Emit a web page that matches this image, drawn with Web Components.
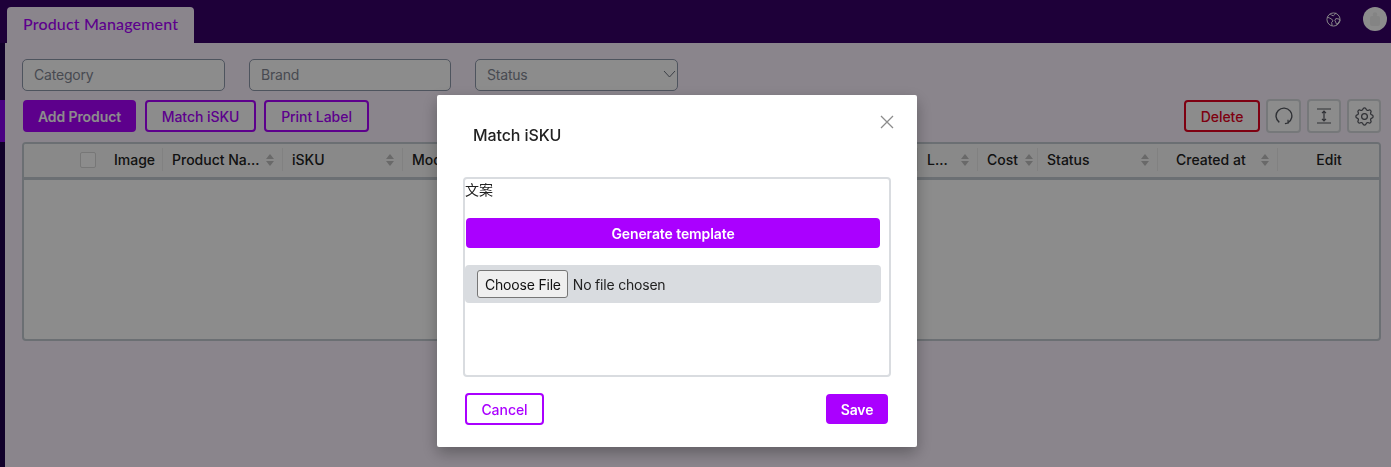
<!DOCTYPE html>
<html lang="en">
<head>
<meta charset="utf-8">
<title>Product Management</title>
<style>
html, body { margin: 0; height: 100%; overflow: hidden; }
body { font-family: Inter, "Liberation Sans", sans-serif; font-size: 14px; background: #fbf2ff; }
</style>
</head>
<body>
<top-bar></top-bar>
<div style="display:flex;height:424px">
    <side-rail></side-rail>
    <product-page style="flex:1"></product-page>
</div>
<match-modal></match-modal>

<script>
const ICONS = {
    globe: `<svg width="15" height="15" viewBox="0 0 16 16" fill="none" stroke="#fff" stroke-width="1"><circle cx="8" cy="8" r="7"/><path d="M1.500 5.500 4 6.500l2 1 1.500 2-1.500 1.500.5 3.500M4.500 2l1.500 1.500 2 .5 1-1 1.500-2.200M9.500 9l1-2 3.500 .5.8 1.500-2 3-1.500 1.200-1-2.500z"/></svg>`,
    refresh: `<svg width="18" height="18" viewBox="0 0 18 18" fill="none" stroke="#555860" stroke-width="1.400"><path d="M4.300 15.400A7.900 7.900 0 1 1 12.800 15.900"/><path d="M13 12.800l.1 3.300-3.200.6" stroke-width="1.200"/></svg>`,
    height: `<svg width="16" height="16" viewBox="0 0 16 16" fill="none" stroke="#555860" stroke-width="1.200"><path d="M1 1h14M1 15h14M8 3.500v9M6 5.200l2-2 2 2M6 10.800l2 2 2-2"/></svg>`,
    gear: `<svg width="23" height="23" viewBox="0 0 24 24" fill="none" stroke="#555860" stroke-width="1.300"><path d="M10.325 4.317c.426-1.756 2.924-1.756 3.350 0a1.724 1.724 0 002.573 1.066c1.543-.94 3.310.826 2.370 2.370a1.724 1.724 0 001.065 2.572c1.756.426 1.756 2.924 0 3.350a1.724 1.724 0 00-1.066 2.573c.94 1.543-.826 3.310-2.370 2.370a1.724 1.724 0 00-2.572 1.065c-.426 1.756-2.924 1.756-3.350 0a1.724 1.724 0 00-2.573-1.066c-1.543.94-3.310-.826-2.370-2.370a1.724 1.724 0 00-1.065-2.572c-1.756-.426-1.756-2.924 0-3.350a1.724 1.724 0 001.066-2.573c-.94-1.543.826-3.310 2.370-2.370.996.608 2.296.07 2.572-1.065z"/><circle cx="12" cy="12" r="3"/></svg>`
};

class TopBar extends HTMLElement {
    constructor(){
        super();
        this.attachShadow({mode: 'open'});
    }
    connectedCallback(){
        this.shadowRoot.innerHTML = `
        <style>
        :host { display: flex; height: 43px; background: #370068; padding-left: 7px; padding-right: 4px; box-sizing: border-box; align-items: flex-end; }
        .tab { width: 187px; height: 36px; box-sizing: border-box; padding-left: 16px; background: #fbf2ff; border-radius: 4px 4px 0 0;
               font: 500 16px/34px Lato, "Liberation Sans", sans-serif; letter-spacing: .16px; color: #aa00ff; }
        .right { margin-left: auto; align-self: stretch; display: flex; align-items: center; gap: 22px; }
        .globe { display: flex; margin-top: -5px; }
        .avatar { width: 24px; height: 24px; border-radius: 50%; background: #fff; margin-top: -5px; display: flex; align-items: center; justify-content: center; }
        </style>
        <div class="tab">Product Management</div>
        <div class="right">
            <span class="globe">${ICONS.globe}</span>
            <span class="avatar"><svg width="12" height="14" viewBox="0 0 12 14" fill="#f0f0f0"><rect x="1" y="4" width="10" height="10" rx="2"/><circle cx="6" cy="2.500" r="2.200"/></svg></span>
        </div>`;
    }
}

class SideRail extends HTMLElement {
    constructor(){
        super();
        this.attachShadow({mode: 'open'});
    }
    connectedCallback(){
        this.shadowRoot.innerHTML = `
        <style>
        :host { display: block; width: 5px; background: #20004d; padding-top: 57px; box-sizing: border-box; }
        .active { height: 42px; background: #8800ed; }
        </style>
        <div class="active"></div>`;
    }
}

class FilterField extends HTMLElement {
    constructor(){
        super();
        this.attachShadow({mode: 'open'});
    }
    connectedCallback(){
        const chevron = this.hasAttribute('select') ? `<svg width="13" height="8" viewBox="0 0 13 8" fill="none" stroke="#6d7380" stroke-width="1"><path d="M1 1l5.500 6L12 1"/></svg>` : '';
        this.shadowRoot.innerHTML = `
        <style>
        :host { display: flex; align-items: center; justify-content: space-between; width: 203px; height: 32px; box-sizing: border-box;
                padding: 0 1px 2px 11px; border: 1px solid #8f99ab; border-radius: 5px; background: #fff; color: #838894; font-size: 14px; letter-spacing: -.2px; }
        </style>
        <span><slot></slot></span>${chevron}`;
    }
}

class AppButton extends HTMLElement {
    static get observedAttributes (){
        return ['kind'];
    }
    constructor(){
        super();
        this.attachShadow({mode: 'open'});
    }
    connectedCallback(){
        this.shadowRoot.innerHTML = `
        <style>
        :host { display: inline-flex; align-items: center; justify-content: center; box-sizing: border-box; height: 32px; border-radius: 4px;
                border: 2px solid #aa00ff; color: #aa00ff; background: #fff; font-size: 14px; font-weight: 500; letter-spacing: -.05px; }
        :host([kind="solid"]) { background: #aa00ff; color: #fff; border-color: #aa00ff; font-weight: 600; letter-spacing: -.1px; }
        :host([kind="danger"]) { border-color: #e60020; color: #e60020; }
        </style>
        <slot></slot>`;
    }
}

class IconButton extends HTMLElement {
    constructor(){
        super();
        this.attachShadow({mode: 'open'});
    }
    connectedCallback(){
        this.shadowRoot.innerHTML = `
        <style>
        :host { display: flex; align-items: center; justify-content: center; width: 34px; height: 34px; box-sizing: border-box;
                border: 2px solid #d8dbdf; border-radius: 4px; background: #fff; }
        </style>
        ${ICONS[this.getAttribute('icon')]}`;
    }
}

class SortArrows extends HTMLElement {
    constructor(){
        super();
        this.attachShadow({mode: 'open'});
    }
    connectedCallback(){
        this.shadowRoot.innerHTML = `
        <style>
        :host { display: flex; flex-direction: column; gap: 2px; }
        i { width: 0; height: 0; border-left: 4px solid transparent; border-right: 4px solid transparent; }
        .up { border-bottom: 5px solid #bfbfbf; }
        .down { border-top: 5px solid #bfbfbf; }
        </style>
        <i class="up"></i><i class="down"></i>`;
    }
}

class DataTable extends HTMLElement {
    constructor(){
        super();
        this.attachShadow({mode: 'open'});
    }
    connectedCallback(){
        // [title, width, sortable, extra class]
        const cols = [
            ['Product Na...', 120, true],
            ['iSKU', 120, true],
            ['Model', 515, false],
            ['L...', 60, true],
            ['Cost', 60, true, 'tight'],
            ['Status', 120, true],
            ['Created at', 120, true, 'created'],
            ['Edit', 0, false, 'center']
        ];
        const cells = cols.map(c => `
            <div class="th ${c[3] || ''}" style="${c[1] ? 'width:' + c[1] + 'px' : 'flex:1'}">
                <span>${c[0]}</span>${c[2] ? '<sort-arrows></sort-arrows>' : ''}
            </div>`).join('');
        this.shadowRoot.innerHTML = `
        <style>
        :host { display: block; height: 199px; box-sizing: border-box; border: 2px solid #c3cad1; border-radius: 4px; background: #fff; overflow: hidden; }
        .head { display: flex; height: 33px; padding-bottom: 2px; box-sizing: border-box; height: 33px; border-bottom: 0; background: #fafafa; align-items: center; }
        .rule { height: 3px; background: #c3cad1; }
        .first { width: 139px; box-sizing: border-box; display: flex; align-items: center; padding-left: 56px; gap: 18px; height: 23px; border-right: 1px solid #ececec; font-weight: 500; color: #222; flex: none; }
        .check { width: 16px; height: 16px; box-sizing: border-box; border: 1px solid #d9d9d9; border-radius: 2px; background: #fff; }
        .th { height: 23px; box-sizing: border-box; display: flex; align-items: center; justify-content: space-between; padding: 0 8px 0 9px; border-right: 1px solid #ececec; font-weight: 500; color: #222; white-space: nowrap; flex: none; }
        .th:last-child { border-right: 0; }
        .th.center { justify-content: center; }
        .th.tight { padding-right: 4px; }
        .th.created { padding-left: 18px; }
        </style>
        <div class="head">
            <div class="first"><span class="check"></span><span>Image</span></div>
            ${cells}
        </div>
        <div class="rule"></div>`;
    }
}

class ProductPage extends HTMLElement {
    constructor(){
        super();
        this.attachShadow({mode: 'open'});
    }
    connectedCallback(){
        this.shadowRoot.innerHTML = `
        <style>
        :host { display: block; padding: 16px 10px 0 17px; box-sizing: border-box; background: #fbf2ff; }
        .filters { display: flex; gap: 24px; }
        .actions { display: flex; align-items: center; gap: 9px; margin: 8px 0 9px 1px; height: 34px; }
        .actions .spacer { flex: 1; }
        .tools { display: flex; gap: 6px; margin-left: -3px; }
        </style>
        <div class="filters">
            <filter-field>Category</filter-field>
            <filter-field style="width:202px">Brand</filter-field>
            <filter-field select>Status</filter-field>
        </div>
        <div class="actions">
            <app-button kind="solid" style="width:113px">Add Product</app-button>
            <app-button style="width:111px">Match iSKU</app-button>
            <app-button style="width:105px;margin-left:-1px">Print Label</app-button>
            <span class="spacer"></span>
            <app-button kind="danger" style="width:76px">Delete</app-button>
            <div class="tools">
                <icon-button icon="refresh" style="width:35px"></icon-button>
                <icon-button icon="height"></icon-button>
                <icon-button icon="gear"></icon-button>
            </div>
        </div>
        <data-table></data-table>`;
    }
}

class MatchModal extends HTMLElement {
    constructor(){
        super();
        this.attachShadow({mode: 'open'});
    }
    connectedCallback(){
        this.shadowRoot.innerHTML = `
        <style>
        :host { position: fixed; inset: 0; background: rgba(0,0,0,.45); display: flex; align-items: flex-start; padding: 95px 0 0 437px; box-sizing: border-box; }
        .dialog { position: relative; width: 480px; height: 352px; box-sizing: border-box; padding: 0 26px; background: #fff; border-radius: 2px; box-shadow: 0 6px 16px rgba(0,0,0,.3); display: flex; flex-direction: column; }
        .title { margin: 29px 0 0 10px; font-size: 16px; line-height: 22px; font-weight: 500; letter-spacing: -.1px; color: #222; }
        .close { position: absolute; top: 20px; right: 23px; display: flex; }
        .box { margin-top: 31px; height: 200px; box-sizing: border-box; border: 2px solid #d9dce0; border-radius: 4px; padding: 0 8px 0 0; color: #222; }
        .copy { font: 14px/20px "Noto Sans CJK SC", Inter, sans-serif; }
        .wide { display: flex; width: 414px; height: 30px; margin: 19px 0 0 1px; }
        .upload { display: flex; align-items: center; width: 416px; height: 38px; margin-top: 17px; padding-left: 12px; box-sizing: border-box; background: #d9dce0; border-radius: 4px; }
        input { font: 14px Inter, "Liberation Sans", sans-serif; color: #222; letter-spacing: -.2px; }
        input::file-selector-button { height: 28px; padding: 0 6px 0 7px; margin-right: 5px; font: 14px Inter, "Liberation Sans", sans-serif; letter-spacing: -.2px; color: #111; background: #efefef; border: 1px solid #767676; border-radius: 3px; }
        .foot { display: flex; justify-content: space-between; margin-top: 16px; padding: 0 3px 0 2px; align-items: center; }
        </style>
        <div class="dialog">
            <div class="title">Match iSKU</div>
            <span class="close"><svg width="14" height="14" viewBox="0 0 14 14" stroke="#8c8c8c" stroke-width="1.300" fill="none"><path d="M1 1l12 12M13 1L1 13"/></svg></span>
            <div class="box">
                <div class="copy">文案</div>
                <app-button class="wide" kind="solid">Generate template</app-button>
                <div class="upload"><input type="file"></div>
            </div>
            <div class="foot">
                <app-button style="width:79px">Cancel</app-button>
                <app-button kind="solid" style="width:62px;height:30px">Save</app-button>
            </div>
        </div>`;
    }
}

customElements.define('top-bar', TopBar);
customElements.define('side-rail', SideRail);
customElements.define('filter-field', FilterField);
customElements.define('app-button', AppButton);
customElements.define('icon-button', IconButton);
customElements.define('sort-arrows', SortArrows);
customElements.define('data-table', DataTable);
customElements.define('product-page', ProductPage);
customElements.define('match-modal', MatchModal);
</script>
</body>
</html>
